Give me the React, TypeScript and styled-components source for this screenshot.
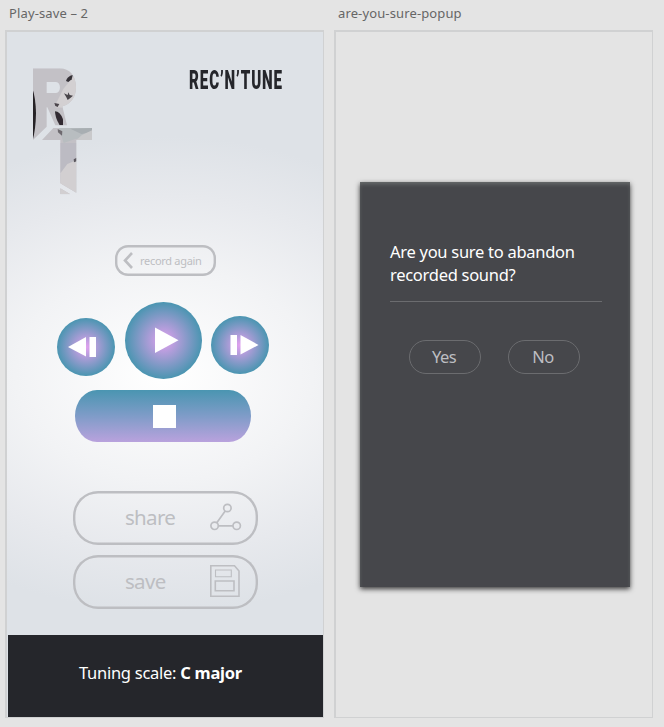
import React from "react";
import styled, { createGlobalStyle } from "styled-components";

const Global = createGlobalStyle`
  * { box-sizing: border-box; }
  body { margin: 0; background: #e4e4e4; font-family: "Noto Sans", "Open Sans", sans-serif; }
  button { font-family: inherit; margin: 0; padding: 0; cursor: pointer; }
  svg { display: block; flex: none; }
`;

const Canvas = styled.main`
  display: flex;
  gap: 10px;
  width: 664px;
  height: 727px;
  padding-left: 5px;
  background: #e4e4e4;
  overflow: hidden;
`;

const Column = styled.section`
  width: 319px;
  flex: none;
`;

const ArtboardName = styled.div`
  height: 30px;
  padding: 4px 0 0 4px;
  font-size: 13px;
  line-height: 19px;
  letter-spacing: 0.13px;
  color: #666;
  white-space: nowrap;
`;

const Artboard = styled.div`
  display: flex;
  flex-direction: column;
  height: 688px;
  border: solid #d0d1d2;
  border-width: 2px 1px 1px 2px;
`;

const PlayerBoard = styled(Artboard)`
  background: radial-gradient(ellipse 330px 238px at 157px 342px, #ffffff 0%, #f2f3f5 45%, #e7e9ed 75%, #dee2e7 100%);
`;

const Header = styled.header`
  display: flex;
  justify-content: space-between;
  height: 213px;
  padding: 36px 40px 0 26px;
`;

const Brand = styled.h1`
  width: 94px;
  height: 26px;
  margin: 0;
  font: 900 25px/26px Roboto, sans-serif;
  letter-spacing: 1.5px;
  color: #25262b;
  white-space: nowrap;
  transform: scaleX(0.605);
  transform-origin: left;
`;

const RecordAgain = styled.button`
  display: flex;
  align-items: center;
  gap: 7px;
  align-self: flex-start;
  width: 101px;
  height: 31px;
  margin-left: 108px;
  padding-left: 8px;
  border: 0;
  border-radius: 13px;
  box-shadow: inset 0 0 0 2.4px #bdbec2;
  background: none;
  color: #bdbec2;
  font-size: 11px;
  letter-spacing: -0.3px;
  white-space: nowrap;
`;

const Transport = styled.div`
  display: flex;
  align-items: center;
  gap: 9.5px;
  height: 77px;
  margin: 25.5px 0 0 50px;
`;

const RoundButton = styled.button<{ $size: number; $shift: number }>`
  display: flex;
  flex: none;
  width: ${(p) => p.$size}px;
  height: ${(p) => p.$size}px;
  margin-top: ${(p) => p.$shift}px;
  border: 0;
  border-radius: 50%;
  background: radial-gradient(circle closest-side, #e3a1f0 0%, #989bcf 50%, #4a95b1 100%);
`;

const StopButton = styled.button`
  display: flex;
  align-items: center;
  justify-content: center;
  width: 176px;
  height: 52px;
  margin: 11.5px 0 0 67.5px;
  padding-left: 4px;
  border: 0;
  border-radius: 22px / 26px;
  background: linear-gradient(#4a95b1, #7f9cc8 50%, #b9a2dd);
`;

const StopMark = styled.span`
  width: 23px;
  height: 23px;
  background: #fff;
`;

const Actions = styled.div`
  display: flex;
  flex-direction: column;
  gap: 10px;
  margin: 48.5px 0 0 66px;
`;

const ActionButton = styled.button`
  display: flex;
  align-items: center;
  justify-content: space-between;
  width: 185px;
  height: 54px;
  padding: 0 16px 2px 52px;
  border: 0;
  border-radius: 25px;
  box-shadow: inset 0 0 0 2.4px #bdbec2;
  background: none;
  color: #bdbec2;
  font-size: 20.5px;
  letter-spacing: -0.7px;
`;

const ScaleBar = styled.footer`
  height: 82px;
  margin: auto 0 0 1px;
  padding: 26px 0 0 71px;
  background: #25262b;
  color: #fff;
  font-size: 16.5px;
  line-height: 24px;
  letter-spacing: -0.27px;
  white-space: nowrap;
`;

const Popup = styled.div`
  width: 270px;
  height: 405px;
  margin: 150px 0 0 24px;
  padding: 58px 28px 0 30px;
  background: #46474b;
  box-shadow: 0 2px 5px rgba(0, 0, 0, 0.75), inset 0 3px 4px -1px #6a6d6d;
`;

const Question = styled.p`
  height: 62px;
  margin: 0;
  border-bottom: 1px solid #6b6c6f;
  color: #fff;
  font-size: 16.5px;
  line-height: 23px;
  letter-spacing: -0.28px;
  white-space: nowrap;
`;

const Answers = styled.div`
  display: flex;
  gap: 27px;
  padding: 38px 0 0 19px;
`;

const AnswerButton = styled.button`
  width: 72px;
  height: 34px;
  padding: 0 2px 1px 0;
  border: 1px solid #6b6c6f;
  border-radius: 17px;
  background: none;
  color: #bdbec2;
  font-size: 16.5px;
  letter-spacing: -0.5px;
`;

const Logo = () => (
  <svg width="60" height="127" viewBox="99 204 180 381">
    <defs>
      <clipPath id="rt">
        <path clipRule="evenodd" d="M99 205H178C210 205 228 228 228 262C228 291 213 312 187 319L201 376H166L142 322H140V380L99 420ZM140 246V279H168C184 279 184 246 168 246Z" />
        <path d="M160 384H276V420H229V578L181 550V420H126ZM181 565L211 583H181Z" />
      </clipPath>
      <filter id="soft"><feGaussianBlur stdDeviation="2" /></filter>
    </defs>
    <g clipPath="url(#rt)">
      <rect x="99" y="204" width="180" height="381" fill="#c3c1c6" />
      <g filter="url(#soft)">
        <path d="M232 220L210 242L190 267L170 307L166 322L212 325L235 280Z" fill="#d3d0d2" />
        <path d="M96 262Q107 292 108 340Q107 390 98 420Z" fill="#252226" />
        <path d="M198 243Q202 229 218 225L215 238L205 246Z" fill="#353137" />
        <path d="M192 280L203 285L205 277L209 285L219 287L212 293L203 300L199 292Z" fill="#49444a" />
        <path d="M163 309L178 312L173 321L166 318Z" fill="#4b454b" />
        <path d="M165 334Q180 334 189 358V376H179Q165 353 165 334Z" fill="#302c30" />
        <path d="M178 384H277V420L228 416L191 429L183 405L174 396Z" fill="#b8bdc0" />
        <path d="M211 386L276 384V397L244 402Z" fill="#a8aeb2" />
        <path d="M246 405L276 391V420H229Z" fill="#c9c9cb" />
        <path d="M173 387L187 394L186 407L174 397Z" fill="#6e6a6f" />
        <path d="M181 429H229V475L181 520Z" fill="#bcbbc3" />
        <path d="M181 520L202 492L229 481V585H181Z" fill="#d2cfd1" />
        <path d="M221 478L230 473V484L222 487Z" fill="#5c595f" />
      </g>
    </g>
  </svg>
);

const PrevIcon = () => (
  <svg width="58" height="58" fill="#fff">
    <path d="M11 29L29 19V38.5Z" />
    <path d="M32.5 19H39V39H32.5Z" />
  </svg>
);

const PlayIcon = () => (
  <svg width="77" height="77" fill="#fff">
    <path d="M30 25.5L53.5 38.300L30 51Z" />
  </svg>
);

const NextIcon = () => (
  <svg width="58" height="58" fill="#fff">
    <path d="M19.5 19H26V39H19.5Z" />
    <path d="M29.5 19L47.5 29L29.5 38.5Z" />
  </svg>
);

const BackIcon = () => (
  <svg width="10" height="17" fill="none" stroke="#bdbec2" strokeWidth="2.6">
    <path d="M9 1L2 8.5L9 16" />
  </svg>
);

const ShareIcon = () => (
  <svg width="32" height="28" fill="none" stroke="#bdbec2" strokeWidth="1.7">
    <circle cx="17.4" cy="5" r="3.7" />
    <circle cx="4.6" cy="22.8" r="3.7" />
    <circle cx="26.7" cy="22.8" r="3.7" />
    <path d="M15.2 8L6.8 19.8M8.3 22.8H23" />
  </svg>
);

const SaveIcon = () => (
  <svg width="32" height="34" fill="none" stroke="#bdbec2">
    <path strokeWidth="1.6" d="M0.8 1.8H24.5L29 7V32.200H0.8Z" />
    <path strokeWidth="1.1" d="M5.5 6H21.3V12.8H5.5Z" />
    <path strokeWidth="1.6" d="M5.3 17H24V26.8H5.3Z" />
  </svg>
);

export default function App() {
  return (
    <>
      <Global />
      <Canvas>
        <Column>
          <ArtboardName>Play-save – 2</ArtboardName>
          <PlayerBoard>
            <Header>
              <Logo />
              <Brand>REC’N’TUNE</Brand>
            </Header>
            <RecordAgain><BackIcon />record again</RecordAgain>
            <Transport>
              <RoundButton $size={58} $shift={13} aria-label="Previous"><PrevIcon /></RoundButton>
              <RoundButton $size={77} $shift={0} aria-label="Play"><PlayIcon /></RoundButton>
              <RoundButton $size={58} $shift={10} aria-label="Next"><NextIcon /></RoundButton>
            </Transport>
            <StopButton aria-label="Stop"><StopMark /></StopButton>
            <Actions>
              <ActionButton>share<ShareIcon /></ActionButton>
              <ActionButton>save<SaveIcon /></ActionButton>
            </Actions>
            <ScaleBar>Tuning scale: <b>C major</b></ScaleBar>
          </PlayerBoard>
        </Column>
        <Column>
          <ArtboardName>are-you-sure-popup</ArtboardName>
          <Artboard>
            <Popup role="dialog">
              <Question>Are you sure to abandon<br />recorded sound?</Question>
              <Answers>
                <AnswerButton>Yes</AnswerButton>
                <AnswerButton>No</AnswerButton>
              </Answers>
            </Popup>
          </Artboard>
        </Column>
      </Canvas>
    </>
  );
}
